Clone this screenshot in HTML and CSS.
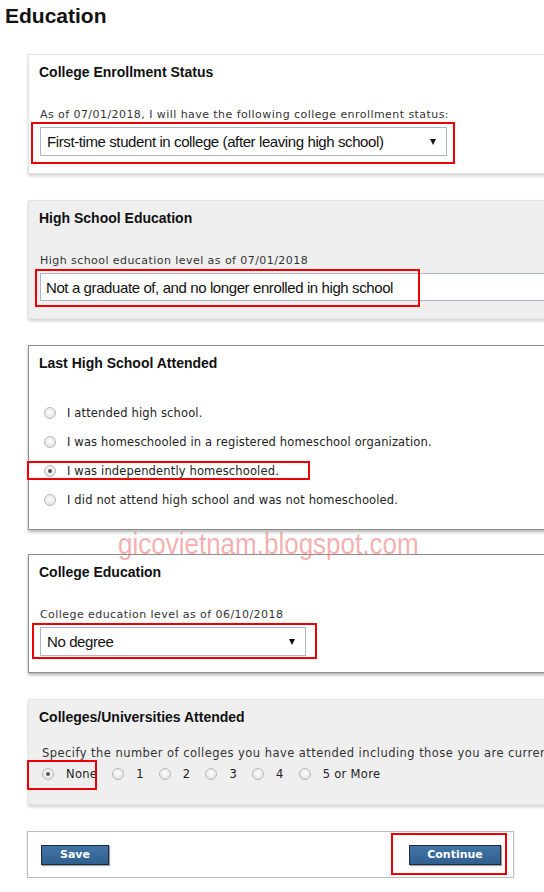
FILE: index.html
```html
<!DOCTYPE html>
<html lang="en">
<head>
    <meta charset="UTF-8">
    <meta name="viewport" content="width=device-width, initial-scale=1.0">
    <title>Education</title>
    <link rel="stylesheet" href="styles.css">
</head>
<body>
    <div class="page">
        <h1 class="page-title">Education</h1>

        <!-- College Enrollment Status -->
        <section class="panel">
            <h2 class="panel-title">College Enrollment Status</h2>
            <label class="field-label">As of 07/01/2018, I will have the following college enrollment status:</label>
            <div class="select select-wide">
                <span>First-time student in college (after leaving high school)</span>
                <span class="arrow"></span>
            </div>
            <div class="mark mark-enroll"></div>
        </section>

        <!-- High School Education -->
        <section class="panel panel-grey">
            <h2 class="panel-title">High School Education</h2>
            <label class="field-label">High school education level as of 07/01/2018</label>
            <div class="select select-full">
                <span>Not a graduate of, and no longer enrolled in high school</span>
            </div>
            <div class="mark mark-highschool"></div>
        </section>

        <!-- Last High School Attended -->
        <section class="panel panel-dark panel-list">
            <h2 class="panel-title">Last High School Attended</h2>
            <div class="radio-list">
                <label class="radio-row"><input type="radio" name="hs"> I attended high school.</label>
                <label class="radio-row"><input type="radio" name="hs"> I was homeschooled in a registered homeschool organization.</label>
                <label class="radio-row"><input type="radio" name="hs" checked> I was independently homeschooled.</label>
                <label class="radio-row"><input type="radio" name="hs"> I did not attend high school and was not homeschooled.</label>
            </div>
            <div class="mark mark-homeschool"></div>
        </section>

        <!-- College Education -->
        <section class="panel panel-dark panel-college">
            <h2 class="panel-title">College Education</h2>
            <label class="field-label">College education level as of 06/10/2018</label>
            <div class="select select-short">
                <span>No degree</span>
                <span class="arrow"></span>
            </div>
            <div class="mark mark-college"></div>
        </section>

        <!-- Colleges/Universities Attended -->
        <section class="panel panel-grey panel-count">
            <h2 class="panel-title">Colleges/Universities Attended</h2>
            <label class="field-label field-label-lg">Specify the number of colleges you have attended including those you are currently attending</label>
            <div class="radio-inline">
                <label class="option"><input type="radio" name="count" checked> None</label>
                <label class="option"><input type="radio" name="count"> 1</label>
                <label class="option"><input type="radio" name="count"> 2</label>
                <label class="option"><input type="radio" name="count"> 3</label>
                <label class="option"><input type="radio" name="count"> 4</label>
                <label class="option"><input type="radio" name="count"> 5 or More</label>
            </div>
            <div class="mark mark-none"></div>
        </section>

        <!-- Buttons -->
        <section class="actions">
            <button class="btn">Save</button>
            <button class="btn btn-continue">Continue</button>
            <div class="mark mark-continue"></div>
        </section>

        <div class="watermark">gicovietnam.blogspot.com</div>
    </div>
</body>
</html>
```

FILE: styles.css
```css
/* base */
* {
    margin: 0;
    padding: 0;
    box-sizing: border-box;
}

html, body {
    overflow-x: hidden;
}

body {
    background-color: #fff;
    color: #000;
    font-family: "Liberation Sans", Arial, sans-serif;
}

.page {
    position: relative;
    width: 544px;
    padding-top: 4px;
}

.page-title {
    font-size: 21px;
    line-height: 24px;
    font-weight: bold;
    color: #111;
    padding-left: 5px;
    margin-bottom: 26px;
}

/* panels */
.panel {
    position: relative;
    width: 560px;
    margin: 0 0 26px 28px;
    padding: 9px 10px 17px 11px;
    background-color: #fff;
    border: 1px solid #e2e2e2;
    box-shadow: 0 2px 3px rgba(0, 0, 0, 0.18);
}

.panel-grey {
    background-color: #efefef;
    border-color: #e4e4e4;
}

.panel-dark {
    border-color: #8f8f8f;
    box-shadow: 0 2px 3px rgba(0, 0, 0, 0.3);
}

.panel-title {
    font-size: 14px;
    line-height: 16px;
    font-weight: bold;
    color: #111;
    margin-left: -1px;
}

.field-label {
    display: block;
    margin-top: 28px;
    font-family: "DejaVu Sans", Verdana, sans-serif;
    font-size: 11px;
    line-height: 14px;
    letter-spacing: 0.44px;
    color: #333;
    white-space: nowrap;
}

.field-label-lg {
    margin-top: 21px;
    padding-left: 2px;
    font-size: 11.5px;
    letter-spacing: 0.45px;
}

/* select boxes */
.select {
    display: flex;
    align-items: center;
    justify-content: space-between;
    height: 29px;
    margin-top: 5px;
    padding: 0 10px 0 6px;
    background-color: #fff;
    border: 1px solid #a9b6cc;
    font-size: 15px;
    letter-spacing: -0.4px;
    color: #111;
    white-space: nowrap;
}

.select-wide {
    width: 407px;
}

.select-full {
    width: 540px;
    height: 28px;
    padding-left: 5px;
}

.select-short {
    width: 266px;
}

.arrow {
    width: 0;
    height: 0;
    border-left: 3.5px solid transparent;
    border-right: 3.5px solid transparent;
    border-top: 6px solid #111;
}

/* radios */
input[type="radio"] {
    appearance: none;
    -webkit-appearance: none;
    flex: none;
    width: 12px;
    height: 12px;
    border-radius: 50%;
    border: 1px solid #b9b9b9;
    background: radial-gradient(circle at 50% 40%, #fdfdfd 0%, #e6e6e6 70%, #d6d6d6 100%);
    position: relative;
}

input[type="radio"]:checked::after {
    content: "";
    position: absolute;
    left: 3px;
    top: 3px;
    width: 4px;
    height: 4px;
    border-radius: 50%;
    background-color: #555;
}

.panel-list {
    margin-bottom: 24px;
    padding-bottom: 15px;
}

.panel-college {
    padding-bottom: 16px;
}

.radio-list {
    margin-top: 27px;
}

.radio-row {
    display: flex;
    align-items: center;
    gap: 11px;
    height: 29px;
    padding-left: 4px;
    font-family: "DejaVu Sans", Verdana, sans-serif;
    font-size: 11.5px;
    letter-spacing: 0.15px;
    color: #222;
    white-space: nowrap;
}

.panel-count {
    padding-bottom: 20px;
}

.radio-inline {
    display: flex;
    align-items: center;
    height: 20px;
    margin-top: 4px;
    padding-left: 2px;
}

.option {
    display: flex;
    align-items: center;
    gap: 12px;
    margin-right: 15px;
    font-family: "DejaVu Sans", Verdana, sans-serif;
    font-size: 11.5px;
    letter-spacing: 0.3px;
    color: #222;
    white-space: nowrap;
}

/* buttons */
.actions {
    position: relative;
    display: flex;
    justify-content: space-between;
    align-items: center;
    width: 487px;
    height: 47px;
    margin-left: 27px;
    padding: 0 12px 0 13px;
    border: 1px solid #bdbdbd;
    box-shadow: 0 1px 2px rgba(0, 0, 0, 0.12);
}

.btn {
    height: 20px;
    width: 68px;
    background: linear-gradient(#4274a6, #2f5f8f);
    border: 1px solid #1d2a38;
    box-shadow: 1px 1px 1px rgba(0, 0, 0, 0.35);
    color: #fff;
    font-family: "DejaVu Sans", Verdana, sans-serif;
    font-size: 11px;
    font-weight: bold;
    cursor: pointer;
}

.btn-continue {
    width: 92px;
}

/* red annotation boxes */
.mark {
    position: absolute;
    border: 2px solid #ee0000;
}

.mark-enroll { left: 2px; top: 67px; width: 424px; height: 42px; }
.mark-highschool { left: 6px; top: 68px; width: 385px; height: 38px; }
.mark-homeschool { left: -2px; top: 115px; width: 283px; height: 19px; }
.mark-college { left: 3px; top: 68px; width: 285px; height: 36px; }
.mark-none { left: -2px; top: 60px; width: 70px; height: 30px; }
.mark-continue { left: 363px; top: 1px; width: 116px; height: 42px; }

/* watermark */
.watermark {
    position: absolute;
    left: 118px;
    top: 527px;
    font-size: 26px;
    line-height: 30px;
    color: rgba(236, 96, 96, 0.5);
    white-space: nowrap;
    transform: scaleY(1.12);
    transform-origin: top left;
}
```
